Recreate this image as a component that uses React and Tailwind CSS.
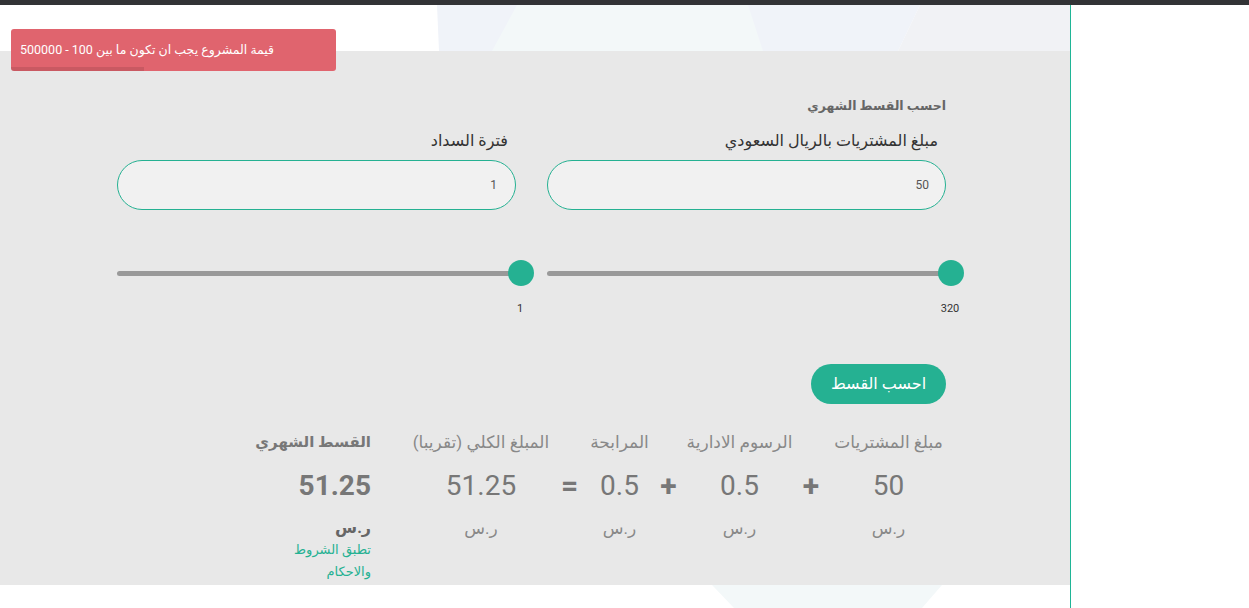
import React from "react";

const font = { fontFamily: 'Roboto, "DejaVu Sans", sans-serif' };

function Slider({ value }) {
  return (
    <div>
      <div className="relative h-[26px] mr-[-5px]">
        <div className="absolute left-0 right-0 top-[11px] h-[5px] rounded-full bg-[#999999]" />
        <div className="absolute right-[-13px] top-0 h-[26px] w-[26px] rounded-full bg-[#25b192]" />
      </div>
      <div className="mt-[15px] flex">
        <div className="mr-[-24px] w-[40px] text-center text-[11px] leading-[16px] text-[#333]">
          {value}
        </div>
      </div>
    </div>
  );
}

function Col({ w, label, value, unit }) {
  return (
    <div className="flex flex-col items-center" style={{ width: w }}>
      <div className="h-[22px] whitespace-nowrap text-[17px] leading-[22px] text-[#888]">{label}</div>
      <div className="mt-[15px] h-[36px] text-[28px] leading-[36px] text-[#777]">{value}</div>
      <div className="mt-[13px] h-[22px] text-[17px] leading-[22px] text-[#888]">{unit}</div>
    </div>
  );
}

function Op({ w, sym }) {
  return (
    <div className="flex flex-col items-center" style={{ width: w }}>
      <div className="h-[22px]" />
      <div className="mt-[15px] h-[36px] text-[30px] font-bold leading-[36px] text-[#777]">{sym}</div>
    </div>
  );
}

export default function App() {
  return (
    <div className="relative h-[608px] w-[1249px] overflow-hidden bg-white" style={font}>
      <div className="h-[5px] bg-[#323336]" />
      <div className="flex h-[603px]">
        <div className="relative w-[1071px] border-r border-[#1fb596]">
          <svg className="absolute inset-0" width="1070" height="603" viewBox="0 0 1070 603">
            <polygon points="437,0 920,0 898,46 439,46" fill="#f0f3f9" />
            <polygon points="920,0 1070,0 1070,46 898,46" fill="#f1f2f5" />
            <polygon points="517,0 748,0 763,46 492,46" fill="#f3f8f9" />
            <polygon points="712,580 942,580 922,603 734,603" fill="#f3f8f9" />
          </svg>
          <div className="h-[46px]" />
          <div className="relative h-[534px] bg-[#e8e8e8] pr-[124px] pt-[45px]" dir="rtl">
            <div className="w-[829px]">
              <div className="h-[20px] text-[12.5px] font-bold leading-[20px] text-[#666]">
                احسب القسط الشهري
              </div>
              <div className="mt-[15px] grid grid-cols-2 gap-x-[31px]">
                <div>
                  <div className="h-[20px] pr-[8px] text-[16px] leading-[20px] text-[#333]">
                    مبلغ المشتريات بالريال السعودي
                  </div>
                  <div className="mt-[9px] flex h-[50px] items-center rounded-full border border-[#25b192] bg-[#f1f1f1] pr-[16px] text-[12px] text-[#555]">
                    50
                  </div>
                  <div className="mt-[50px]">
                    <Slider value="320" />
                  </div>
                </div>
                <div>
                  <div className="h-[20px] pr-[8px] text-[16px] leading-[20px] text-[#333]">
                    فترة السداد
                  </div>
                  <div className="mt-[9px] flex h-[50px] items-center rounded-full border border-[#25b192] bg-[#f1f1f1] pr-[18px] text-[12px] text-[#555]">
                    1
                  </div>
                  <div className="mt-[50px]">
                    <Slider value="1" />
                  </div>
                </div>
              </div>
              <div className="mt-[47px] flex">
                <div className="flex h-[40px] w-[135px] items-center justify-center rounded-full bg-[#25b192] text-[16px] text-white">
                  احسب القسط
                </div>
              </div>
              <div className="mt-[27px] flex">
                <Col w={115} label="مبلغ المشتريات" value="50" unit="ر.س" />
                <Op w={40} sym="+" />
                <Col w={103} label="الرسوم الادارية" value="0.5" unit="ر.س" />
                <Op w={39} sym="+" />
                <Col w={59} label="المرابحة" value="0.5" unit="ر.س" />
                <Op w={41} sym="=" />
                <Col w={136} label="المبلغ الكلي (تقريبا)" value="51.25" unit="ر.س" />
                <div className="mr-[42px] flex w-[130px] flex-col items-start">
                  <div className="h-[22px] whitespace-nowrap text-[15px] font-bold leading-[22px] text-[#777]">
                    القسط الشهري
                  </div>
                  <div className="mt-[15px] h-[36px] text-[28px] font-bold leading-[36px] text-[#777]">
                    51.25
                  </div>
                  <div className="mt-[13px] h-[22px] text-[16px] font-bold leading-[22px] text-[#666]">
                    ر.س
                  </div>
                  <div className="h-[22px] text-[13px] leading-[22px] text-[#25b192]">تطبق الشروط</div>
                  <div className="h-[22px] text-[13px] leading-[22px] text-[#25b192]">والاحكام</div>
                </div>
              </div>
            </div>
          </div>
        </div>
        <div className="flex-1 bg-white" />
      </div>
      <div
        className="absolute left-[11px] top-[29px] flex h-[42px] w-[325px] items-center justify-end overflow-hidden rounded-[3px] bg-[#e0646e] pl-[9px] text-[12.5px] text-white"
        dir="rtl"
      >
        <span>قيمة المشروع يجب ان تكون ما بين 100 - 500000</span>
        <div className="absolute bottom-0 left-0 h-[4px] w-[133px] bg-black/10" />
      </div>
    </div>
  );
}
